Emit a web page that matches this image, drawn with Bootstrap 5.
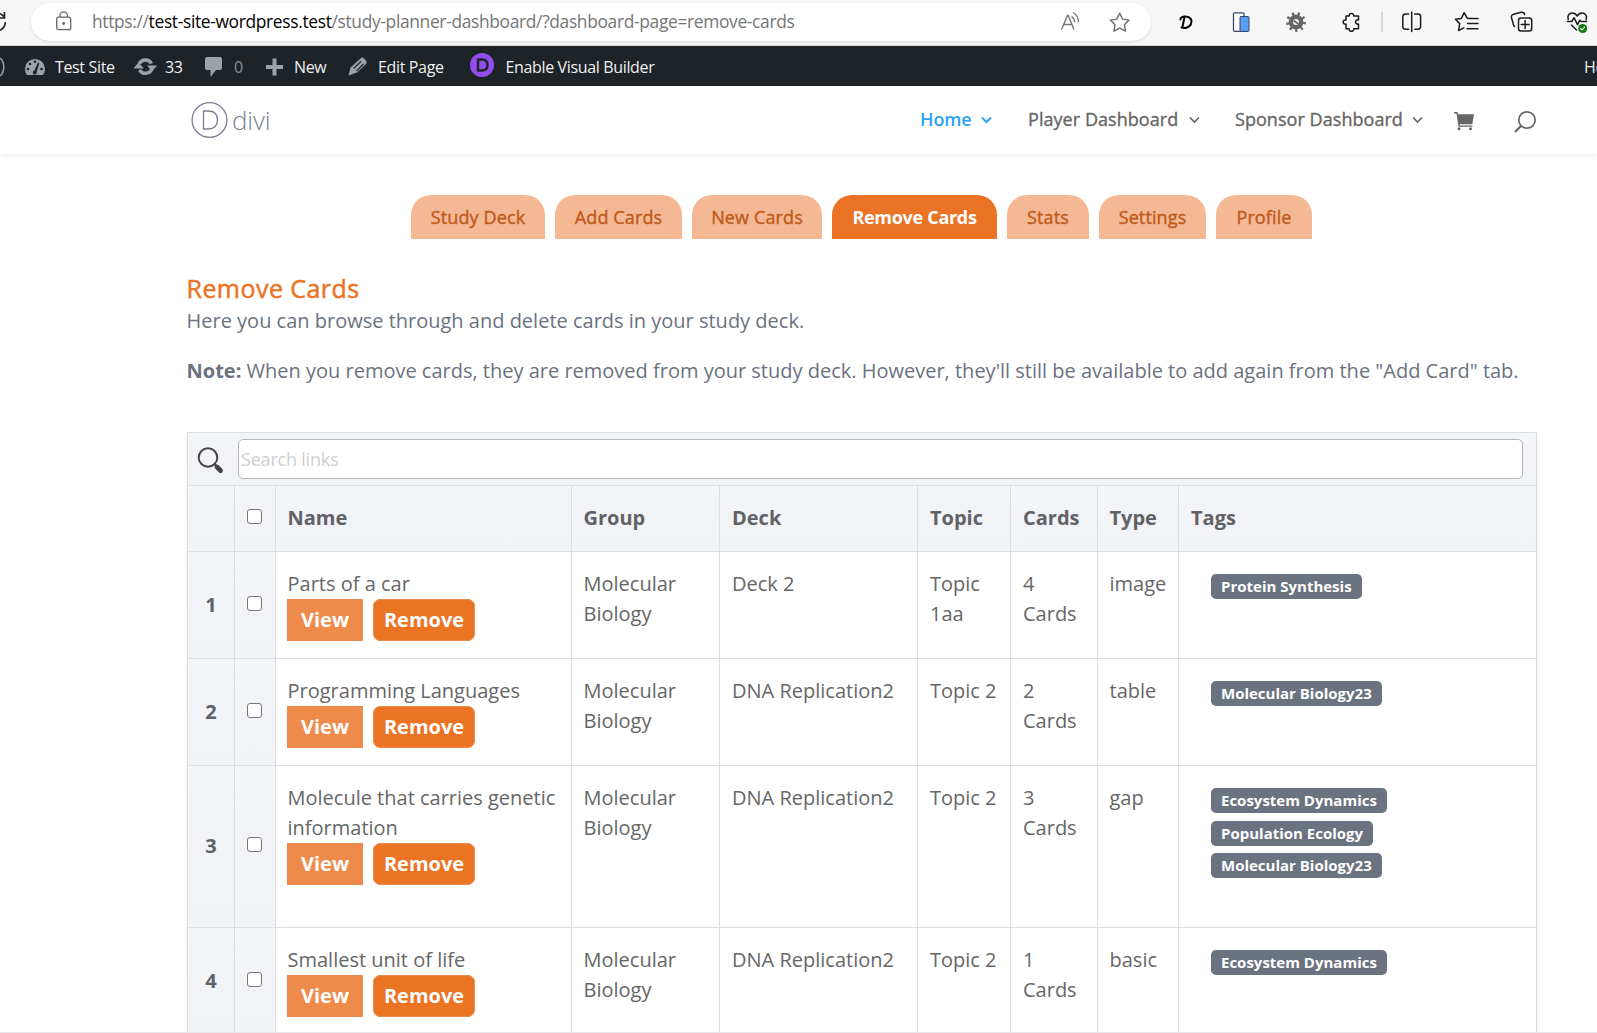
<!DOCTYPE html>
<html lang="en">
<head>
<meta charset="utf-8">
<title>Remove Cards</title>
<link href="https://cdn.jsdelivr.net/npm/bootstrap@5.3.0/dist/css/bootstrap.min.css" rel="stylesheet">
<style>
html,body{height:100%;overflow:hidden}
body{font-family:"Open Sans",sans-serif;color:#666;background:#fff}
svg{display:block;flex:none;overflow:visible}
.page{height:100vh;overflow:hidden;border-bottom:1px solid #e9e9eb}
/* browser toolbar */
.toolbar{height:46px;background:#f7f7f7;border-bottom:1px solid #d5d5d5;padding-top:3px;flex:none}
.reload{width:31px}
.address{width:1120px;height:38px;border-radius:19px;background:#fff;box-shadow:0 1px 3px rgba(0,0,0,.12);padding-left:25px}
.lock{margin-bottom:2px}
.url{font-size:17.4px;color:#767676;width:968px;margin-left:20px;letter-spacing:-.34px;line-height:36px;padding-bottom:2px}
.url b{font-weight:400;color:#000}
/* admin bar */
.adminbar{height:40px;background:#1d2327;color:#f0f0f1;font-size:16px;letter-spacing:-.35px;line-height:40px;flex:none}
.adminbar svg{fill:#9ca2a7}
.slot{display:flex;align-items:center;flex:none;white-space:nowrap;padding-top:1px}
.slot i{flex:none;font-style:normal}
.slot .muted-count{color:#8b9095}
.w-wp{width:24px}.w-site{width:110px}.w-upd{width:71px}.w-com{width:61px}.w-new{width:82px}.w-edit{width:122px}.w-divi{width:1114px}
.i-28{width:28px}.i-29{width:29px}.i-30{width:30px}.i-31{width:31px}.i-36{width:35.5px}
.divi-dot{margin-bottom:3px}
/* site header */
.sitehead{height:68px;box-shadow:0 1px 6px rgba(0,0,0,.09);padding-left:191px;flex:none}
.brand{width:729px;color:#7b7f92}
.brand-text{font-size:26px;font-weight:300;margin-left:4px;line-height:36px;letter-spacing:-.2px}
.menu{padding-bottom:2px}
.menu a{color:#666;font-size:18px;letter-spacing:.05px;-webkit-text-stroke:.35px currentColor;text-decoration:none;white-space:nowrap}
.menu a.now{color:#2ea3f2;font-weight:600;letter-spacing:-.15px;-webkit-text-stroke:0}
.m-home{width:108px}.m-home span{width:61px}
.m-player{width:207px}.m-player span{width:160.500px}
.m-sponsor{width:219px}.m-sponsor span{width:176.500px}
.cart{margin-top:2px}
.find{margin:3px 0 0 38.500px}
/* tabs */
.tabs{gap:10px;margin:41px 0 0 411px}
.tab-pill{height:44px;background:#f4b994;color:#c05a1c;border-radius:20px 20px 0 0;font-size:18px;letter-spacing:.12px;-webkit-text-stroke:.4px currentColor;text-align:center;line-height:44px;text-decoration:none;white-space:nowrap}
.tab-pill.now{background:#ea7326;color:#fff;font-weight:700;letter-spacing:-.3px;-webkit-text-stroke:0}
.t-134{width:134px}.t-127{width:127px}.t-130{width:130px}.t-165{width:165px}.t-82{width:82px}.t-107{width:107px}.t-96{width:96px}
/* content */
.content{margin:32px 0 0 187px;width:1350px;color:#6b7280;font-size:20px;line-height:30px}
.content h1{font-size:25px;font-weight:400;letter-spacing:.45px;-webkit-text-stroke:.5px currentColor;color:#eb7324;line-height:34px;margin:0 0 1px -.5px}
.content p{margin:0 0 20px -.5px;white-space:nowrap}
.cards{width:1350px;table-layout:fixed;border-collapse:separate;border-spacing:0;border-left:1px solid #dcdee6;border-top:1px solid #dcdee6;margin-top:46px;color:#666;box-shadow:0 2px 4px rgba(0,0,0,.08)}
.cards td,.cards th{border-right:1px solid #dcdee6;border-bottom:1px solid #dcdee6;padding:17px 0 0 11.5px;vertical-align:top}
.cards .tint,.cards thead th,.cards thead td{background:linear-gradient(#f4f5f9,#f1f2f6)}
.cards thead th{vertical-align:middle;padding:0 0 1px 11.5px;height:66px;color:#606266}
.cards tr>:nth-child(5),.cards tr>:nth-child(6),.cards tr>:nth-child(7),.cards thead th:nth-child(9){padding-left:12px}
.cards .num{text-align:center;vertical-align:middle;font-weight:700;padding:0 0 1px;color:#606266}
.cards .pick,.cards thead th.pick{vertical-align:middle;padding:0 0 4px 12px}
.cards .searchcell{height:53px;padding:0;vertical-align:middle}
.c-num{width:47px}.c-pick{width:41px}.c-name{width:296px}.c-group{width:148px}.c-deck{width:198px}.c-topic{width:93px}.c-cards{width:87px}.c-type{width:81px}.c-tags{width:358px}
.h-std{height:107px}.h-tall{height:162px}
.tick{appearance:none;width:15px;height:15px;border:1.3px solid #767676;border-radius:3px;background:#fff;display:block;margin:0}
.searchbox{width:1285px;height:40px;border:1px solid #b4b6b8;border-radius:5px;font-size:18px;letter-spacing:-.2px;padding:0 2px;background:#fff;margin-left:13px}
.searchbox::placeholder{color:#cfcfcf;opacity:1}
.glass{margin-top:1px}
.act{height:42px;border:1px solid #ee8b4b;color:#fff;font-weight:700;font-size:20px;line-height:40px;padding:0;background:#ee8b4b;border-radius:0;margin-left:-.5px;width:76px;display:block}
.act.kill{background:#eb7324;border-radius:7px;width:102px;margin-left:10px}
.tags{padding:5px 0 0 20.5px}
.tag{display:table;height:25px;background:#6b7280;color:#fff;border-radius:5px;font-size:15px;font-weight:700;line-height:25px;padding:0 10px;margin-bottom:7.5px}
</style>
</head>
<body>
<div class="page d-flex flex-column">
<div class="toolbar d-flex">
 <div class="reload"><svg width="31" height="38" fill="none" stroke="#222" stroke-width="1.6"><path d="M-6 11.500C-2 9 3 11 4.500 15M4.500 9v6H-1M5.300 19c0 4-2 7-6 8.500"/></svg></div>
 <div class="address d-flex align-items-center">
  <svg class="lock" width="16" height="20" fill="none" stroke="#666" stroke-width="1.3"><rect x=".7" y="6.200" width="14" height="12.500" rx="2"/><path d="M4 6V4.500a3.700 3.700 0 0 1 7.400 0V6"/><circle cx="7.700" cy="12.500" r=".8" fill="#666"/></svg>
  <div class="url text-nowrap">https://<b>test-site-wordpress.test</b>/study-planner-dashboard/?dashboard-page=remove-cards</div>
  <svg width="50" height="20" fill="none" stroke="#707070" stroke-width="1.3"><path d="M1.500 17.500 7.500 3.500h.7L14 17.500M3.800 12.500h8M11.500 4.500c2 1.200 3 3 3.200 5.500M13 .5c3.500 2 5.200 5 5.500 9.500"/></svg>
 </div>
 <svg width="446" height="38" fill="none" stroke="#1c1c1c" stroke-width="1.5" stroke-linejoin="round" stroke-linecap="round">
  <path stroke="#6c6c6c" stroke-width="1.400" d="M-31.300 10.200l2.900 5.900 6.500 1-4.700 4.600 1.100 6.400-5.800-3-5.800 3 1.100-6.400-4.700-4.600 6.500-1z"/>
  <path stroke="#000" stroke-width="2" d="M33.500 14c-1 5-1.500 8-2.300 10.500M29.500 16.500c-.5-2 2.500-3.500 5.500-3 5 .5 6.500 4 5 7.500-1.500 3.500-6 4.500-9.500 3.500"/>
  <rect x="82.500" y="9.800" width="10.500" height="18.500" rx="1.200" fill="#fff" stroke="#384668" stroke-width="1.300"/><rect x="89" y="13.500" width="9" height="15" rx="1" fill="#5a9df5" stroke="#384668" stroke-width="1"/>
  <g transform="translate(145 19)" stroke-linecap="butt"><circle r="5.200" stroke="#666" stroke-width="4.400"/><circle r="8.300" stroke="#666" stroke-width="3.200" stroke-dasharray="2.200 3.593"/><path d="M-2.500-1.500L2.500 2" stroke="#666" stroke-width="1.800"/></g>
  <path d="M195 13h3.200c-.5-3.500 5-3.500 4.500 0h4.800v3.900c-4-.8-4 5 0 4.200v4.700h-4.800c.5 3.400-5 3.400-4.500 0H195v-4.700c-3.800.8-3.800-4.900 0-4.100z"/>
  <path stroke="#cbcbcb" stroke-linecap="butt" d="M231 9v20"/>
  <path d="M257.700 11h-3.200q-2.700 0-2.700 2.700v9.800q0 2.700 2.700 2.700h3.200M263.700 11h3.200q2.700 0 2.700 2.700v9.800q0 2.700-2.700 2.700h-3.200M260.700 9v19.500"/>
  <path d="M319 15.500l-2.800-.3-3-5.500-2.800 5.700-6 .9 4.300 4.300-1.200 7 5.400-2.800M319.500 15.500h7.500M316.500 20.500h10.500M316 25.800h11"/>
  <path d="M363.500 23.500q-.8-.5-1.100-2l-1.800-6.500q-.8-3 2-3.700l7.500-2q2.800-.6 3.500 2.200M370 15h8.200q2.500 0 2.500 2.500v8q0 2.500-2.500 2.500H370q-2.500 0-2.500-2.500v-8q0-2.500 2.500-2.500M374.100 17.500v8M370.100 21.500h8"/>
  <path d="M417.300 16.500c-1.300-3.500.7-6.500 4-6.500 2.300 0 3.800 1.100 4.900 3 1.100-1.900 2.600-3 4.900-3 3.300 0 5.300 3 4 6.500M416.500 18.500h4.300l2.200-3.800 3.500 7 2.300-4.500 1.200 1.300h5.500M420.500 22l5 5"/><circle cx="431.700" cy="25.500" r="4.500" fill="#107c10" stroke="none"/><path stroke="#fff" stroke-width="1.100" d="M429.700 25.500l1.500 1.500 2.500-3"/>
 </svg>
</div>

<div class="adminbar d-flex">
 <div class="slot w-wp"><svg width="6" height="20"><path d="M0 1c5 4 5 14 0 18" fill="none" stroke="#9ca2a7" stroke-width="1.500"/></svg></div>
 <div class="slot w-site"><i class="i-31"><svg width="22" height="20"><path d="M3 18A10 10 0 1 1 19 18z"/><g fill="#1d2327"><circle cx="4" cy="12" r="1.300"/><circle cx="6" cy="7" r="1.300"/><circle cx="11" cy="4.700" r="1.300"/><circle cx="17.500" cy="12" r="1.300"/><path d="M14.100 5.500l1.300.8-2.700 8.500a2 2 0 1 1-2.400-1.200z"/></g></svg></i>Test Site</div>
 <div class="slot w-upd"><i class="i-31"><svg width="24" height="20"><g fill="none" stroke="#9ca2a7" stroke-width="3.400"><path d="M5.300 6.700A7 7 0 0 1 17.500 6.500M17.700 12.500A7 7 0 0 1 5.500 13"/></g><path d="M-.5 11.500l5-6 5.500 6zM13 8.500h10l-5 6z"/></svg></i>33</div>
 <div class="slot w-com"><i class="i-29"><svg width="18" height="22"><path d="M2 1h13q2 0 2 2v9q0 2-2 2h-4l-5.500 7v-7H2q-2 0-2-2V3q0-2 2-2z"/></svg></i><span class="muted-count">0</span></div>
 <div class="slot w-new"><i class="i-28"><svg width="17" height="18"><path d="M6.500 .5h4v6.500H17v4h-6.500v6.500h-4v-6.500H0V7h6.500z"/></svg></i>New</div>
 <div class="slot w-edit"><i class="i-30"><svg width="19" height="20"><path d="M12 2q2-2.500 4-.5l2 2q1.500 1.500 0 3.500L9 15.500 .5 18.500l2-8z"/><path d="M5.500 11.500l7.500-7M8.500 14l7-7" stroke="#1d2327" stroke-width="1.100"/></svg></i>Edit Page</div>
 <div class="slot w-divi"><i class="i-36"><svg class="divi-dot" width="24" height="24"><circle cx="12" cy="12" r="12" fill="#934cf0"/><path d="M8 6.500h4q5.500 0 5.500 5.500T12 17.500H8z" fill="none" stroke="#1d2327" stroke-width="2.400"/></svg></i>Enable Visual Builder</div>
 <div class="slot">Howdy</div>
</div>

<div class="sitehead d-flex align-items-center">
 <div class="brand d-flex align-items-center"><svg width="37" height="36" fill="none" stroke="#7b7f92" stroke-width="1.300"><circle cx="18.500" cy="18" r="17.400"/><path d="M12.500 9h4.500c6.500 0 9.500 3.700 9.500 9s-3 9-9.500 9h-4.500z"/></svg><span class="brand-text">divi</span></div>
 <nav class="menu d-flex align-items-center">
  <a class="now m-home d-flex align-items-center" href="#"><span>Home</span><svg width="11" height="7" fill="none" stroke="currentColor" stroke-width="2"><path d="M1 1.500l4.500 4.500L10 1.500"/></svg></a>
  <a class="m-player d-flex align-items-center" href="#"><span>Player Dashboard</span><svg width="11" height="7" fill="none" stroke="currentColor" stroke-width="1.700"><path d="M1 1.500l4.500 4.500L10 1.500"/></svg></a>
  <a class="m-sponsor d-flex align-items-center" href="#"><span>Sponsor Dashboard</span><svg width="11" height="7" fill="none" stroke="currentColor" stroke-width="1.700"><path d="M1 1.500l4.500 4.500L10 1.500"/></svg></a>
 </nav>
 <svg class="cart" width="21" height="19" fill="#666"><path d="M0 0h3.300l1 2.300H20L18.300 12.200H5.500L5.800 13.400H18.500V14.800H4.500L2.500 1.500H0z"/><circle cx="5" cy="16.700" r="1.500"/><circle cx="16.500" cy="16.700" r="1.500"/></svg>
 <svg class="find" width="22" height="22" fill="none" stroke="#666" stroke-width="1.700"><circle cx="13" cy="9" r="8.200"/><path d="M7 15L1 21" stroke-width="2.200"/></svg>
</div>

<div class="tabs d-flex">
 <a class="tab-pill t-134">Study Deck</a><a class="tab-pill t-127">Add Cards</a><a class="tab-pill t-130">New Cards</a><a class="tab-pill now t-165">Remove Cards</a><a class="tab-pill t-82">Stats</a><a class="tab-pill t-107">Settings</a><a class="tab-pill t-96">Profile</a>
</div>

<div class="content">
 <h1>Remove Cards</h1>
 <p>Here you can browse through and delete cards in your study deck.</p>
 <p><strong>Note:</strong> When you remove cards, they are removed from your study deck. However, they'll still be available to add again from the "Add Card" tab.</p>
 <table class="cards">
  <colgroup><col class="c-num"><col class="c-pick"><col class="c-name"><col class="c-group"><col class="c-deck"><col class="c-topic"><col class="c-cards"><col class="c-type"><col class="c-tags"></colgroup>
  <thead>
   <tr><td colspan="9" class="searchcell"><div class="d-flex align-items-center ps-2"><svg class="glass" width="29" height="28" fill="none" stroke="#444"><circle cx="12" cy="11.500" r="9.300" stroke-width="2"/><path d="M18.500 18l2.500 2.500" stroke-width="2"/><path d="M21 21l3.500 3.500" stroke-width="4.800" stroke-linecap="round"/></svg><input class="searchbox" placeholder="Search links"></div></td></tr>
   <tr><th></th><th class="pick"><input type="checkbox" class="tick"></th><th>Name</th><th>Group</th><th>Deck</th><th>Topic</th><th>Cards</th><th>Type</th><th>Tags</th></tr>
  </thead>
  <tbody>
   <tr class="h-std"><td class="num tint">1</td><td class="pick tint"><input type="checkbox" class="tick"></td><td>Parts of a car<div class="d-flex"><button class="act btn">View</button><button class="act kill btn">Remove</button></div></td><td>Molecular<br>Biology</td><td>Deck 2</td><td>Topic<br>1aa</td><td>4<br>Cards</td><td>image</td><td><div class="tags"><span class="tag">Protein Synthesis</span></div></td></tr>
   <tr class="h-std"><td class="num tint">2</td><td class="pick tint"><input type="checkbox" class="tick"></td><td>Programming Languages<div class="d-flex"><button class="act btn">View</button><button class="act kill btn">Remove</button></div></td><td>Molecular<br>Biology</td><td>DNA Replication2</td><td>Topic 2</td><td>2<br>Cards</td><td>table</td><td><div class="tags"><span class="tag">Molecular Biology23</span></div></td></tr>
   <tr class="h-tall"><td class="num tint">3</td><td class="pick tint"><input type="checkbox" class="tick"></td><td>Molecule that carries genetic<br>information<div class="d-flex"><button class="act btn">View</button><button class="act kill btn">Remove</button></div></td><td>Molecular<br>Biology</td><td>DNA Replication2</td><td>Topic 2</td><td>3<br>Cards</td><td>gap</td><td><div class="tags"><span class="tag">Ecosystem Dynamics</span><span class="tag">Population Ecology</span><span class="tag">Molecular Biology23</span></div></td></tr>
   <tr class="h-std"><td class="num tint">4</td><td class="pick tint"><input type="checkbox" class="tick"></td><td>Smallest unit of life<div class="d-flex"><button class="act btn">View</button><button class="act kill btn">Remove</button></div></td><td>Molecular<br>Biology</td><td>DNA Replication2</td><td>Topic 2</td><td>1<br>Cards</td><td>basic</td><td><div class="tags"><span class="tag">Ecosystem Dynamics</span></div></td></tr>
  </tbody>
 </table>
</div>
</div>
<script src="https://cdn.jsdelivr.net/npm/bootstrap@5.3.0/dist/js/bootstrap.bundle.min.js"></script>
</body>
</html>
